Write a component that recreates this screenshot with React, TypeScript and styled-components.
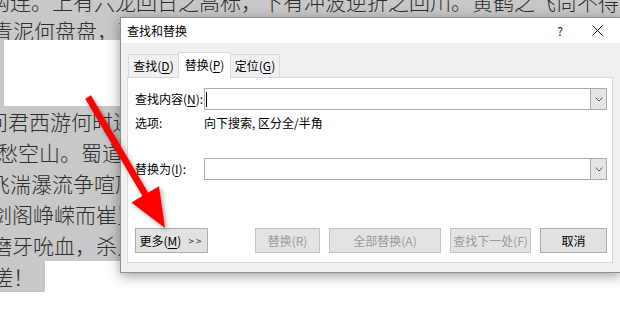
import React from "react";
import styled, { createGlobalStyle } from "styled-components";

const UI_FONT = `"Noto Sans CJK SC", "Microsoft YaHei", "Noto Sans", sans-serif`;

const GlobalStyle = createGlobalStyle`
  html, body { margin: 0; padding: 0; background: #ffffff; }
  body { overflow: hidden; }
  * { box-sizing: border-box; }
`;

const Page = styled.div`
  position: relative;
  width: 620px;
  height: 309px;
  overflow: hidden;
  background: #ffffff;
`;

/* ---------- document behind the dialog ---------- */

const Doc = styled.div`
  display: flex;
  flex-direction: column;
  align-items: flex-start;
  margin-top: -13px;
  font-family: ${UI_FONT};
  font-size: 21px;
  font-weight: 300;
  color: #2e2e2e;
`;

const Line = styled.div<{ $shift: number; $h?: number; $lh?: number; $short?: boolean }>`
  height: ${(p) => p.$h ?? 31}px;
  line-height: ${(p) => p.$lh ?? 31}px;
  background: #c8c8c8;
  white-space: nowrap;
  text-indent: ${(p) => p.$shift}px;
  width: ${(p) => (p.$short ? "auto" : "100%")};
  padding-right: ${(p) => (p.$short ? "11px" : "0")};
`;

const BlankLine = styled.div`
  width: 100%;
  height: 66px;
  background: #c8c8c8;
  padding-left: 4px;
`;

const BlankFill = styled.div`
  height: 100%;
  background: #ffffff;
`;

/* ---------- dialog ---------- */

const Dialog = styled.div`
  position: absolute;
  left: 120px;
  top: 17px;
  width: 501px;
  height: 256px;
  background: #f0f0f0;
  border: 1px solid #8f8f8f;
  box-shadow: 0 3px 12px rgba(0, 0, 0, 0.38);
  font-family: ${UI_FONT};
  font-size: 12px;
  color: #000;
  display: flex;
  flex-direction: column;
`;

const TitleBar = styled.div`
  height: 25px;
  background: #ffffff;
  display: flex;
  align-items: center;
  padding-left: 6px;
`;

const Title = styled.div`
  flex: 1;
  line-height: 16px;
`;

const TitleButton = styled.div<{ $w: number }>`
  width: ${(p) => p.$w}px;
  height: 25px;
  display: flex;
  align-items: center;
  justify-content: center;
  color: #222;
  font-size: 12px;
`;

const Body = styled.div`
  flex: 1;
  display: flex;
  flex-direction: column;
  padding: 9px 7px 0 6px;
`;

const Tabs = styled.div`
  position: relative;
  z-index: 1;
  display: flex;
  align-items: flex-end;
  height: 26px;
  margin-bottom: -1px;
  padding-left: 1px;
`;

const Tab = styled.div<{ $active?: boolean; $w: number }>`
  position: relative;
  z-index: ${(p) => (p.$active ? 2 : 1)};
  width: ${(p) => p.$w}px;
  height: ${(p) => (p.$active ? 26 : 23)}px;
  margin-bottom: ${(p) => (p.$active ? 0 : 1)}px;
  margin-left: -1px;
  &:first-child { margin-left: 0; }
  border: 1px solid #d9d9d9;
  border-bottom: none;
  background: ${(p) => (p.$active ? "#ffffff" : "#f0f0f0")};
  display: flex;
  align-items: center;
  justify-content: center;
  padding-bottom: ${(p) => (p.$active ? 1 : 0)}px;
  line-height: 16px;
`;

const Panel = styled.div`
  height: 186px;
  background: #ffffff;
  border: 1px solid #d9d9d9;
  padding: 0 5px 0 7px;
  display: flex;
  flex-direction: column;
`;

const FieldRow = styled.div<{ $top: number }>`
  display: grid;
  grid-template-columns: 69px 1fr;
  align-items: center;
  margin-top: ${(p) => p.$top}px;
`;

const Label = styled.div`
  line-height: 16px;
  white-space: nowrap;
`;

const Combo = styled.div`
  height: 22px;
  border: 1px solid #ababab;
  background: #ffffff;
  display: flex;
  align-items: stretch;
`;

const ComboText = styled.div`
  flex: 1;
  display: flex;
  align-items: center;
  padding-left: 1px;
`;

const Caret = styled.span`
  width: 1px;
  height: 15px;
  background: #000;
`;

const DropButton = styled.div`
  width: 16px;
  border-left: 1px solid #ababab;
  background: #e5e5e5;
  display: flex;
  align-items: center;
  justify-content: center;
`;

const ButtonRow = styled.div`
  display: flex;
  align-items: center;
  margin-top: 48px;
`;

const ButtonGroup = styled.div`
  margin-left: auto;
  display: flex;
  gap: 9px;
`;

const Button = styled.div<{ $w: number; $disabled?: boolean }>`
  width: ${(p) => p.$w}px;
  height: 25px;
  display: flex;
  align-items: center;
  justify-content: center;
  white-space: nowrap;
  border: 1px solid ${(p) => (p.$disabled ? "#c2c2c2" : "#adadad")};
  background: ${(p) => (p.$disabled ? "#e3e3e3" : "#e1e1e1")};
  color: ${(p) => (p.$disabled ? "#9a9a9a" : "#000")};
  line-height: 16px;
`;

const Chevrons = styled.span`
  margin-left: 7px;
  font-size: 10px;
  letter-spacing: 2px;
  color: #333;
`;

const Key = styled.span`
  text-decoration: underline;
  text-underline-offset: 2px;
`;

const ArrowLayer = styled.svg`
  position: absolute;
  left: 0;
  top: 0;
  width: 620px;
  height: 309px;
  pointer-events: none;
  filter: drop-shadow(2px 2px 2px rgba(0, 0, 0, 0.35));
`;

const Chevron = () => (
  <svg width="8" height="5" viewBox="0 0 8 5">
    <polyline points="0.5,0.5 4,4 7.5,0.5" fill="none" stroke="#555" strokeWidth="1" />
  </svg>
);

const CloseIcon = () => (
  <svg width="11" height="11" viewBox="0 0 11 11">
    <path d="M0.5 0.5 L10.5 10.5 M10.5 0.5 L0.5 10.5" stroke="#111" strokeWidth="1" />
  </svg>
);

export default function App() {
  return (
    <>
      <GlobalStyle />
      <Page>
        <Doc>
          <Line $shift={-11} $h={28} $lh={28}>
            钩连。上有六龙回日之高标，下有冲波逆折之回川。黄鹤之飞尚不得过
          </Line>
          <Line $shift={-8} $h={25}>
            青泥何盘盘，百步九折萦岩峦。扪参历井仰胁息
          </Line>
          <BlankLine>
            <BlankFill />
          </BlankLine>
          <Line $shift={-13}>问君西游何时还？畏途巉岩不可攀。</Line>
          <Line $shift={-3}>愁空山。蜀道之难，难于上青天，</Line>
          <Line $shift={-11}>飞湍瀑流争喧豗，砯崖转石万壑雷。</Line>
          <Line $shift={-9}>剑阁峥嵘而崔嵬，一夫当关，万夫莫开。</Line>
          <Line $shift={-9}>磨牙吮血，杀人如麻。锦城虽云乐，</Line>
          <Line $shift={-8} $short>
            嗟！
          </Line>
        </Doc>

        <Dialog>
          <TitleBar>
            <Title>查找和替换</Title>
            <TitleButton $w={30}>?</TitleButton>
            <TitleButton $w={45}>
              <CloseIcon />
            </TitleButton>
          </TitleBar>
          <Body>
            <Tabs>
              <Tab $w={51}>
                查找(<Key>D</Key>)
              </Tab>
              <Tab $w={53} $active>
                替换(<Key>P</Key>)
              </Tab>
              <Tab $w={50}>
                定位(<Key>G</Key>)
              </Tab>
            </Tabs>
            <Panel>
              <FieldRow $top={10}>
                <Label>
                  查找内容(<Key>N</Key>):
                </Label>
                <Combo>
                  <ComboText>
                    <Caret />
                  </ComboText>
                  <DropButton>
                    <Chevron />
                  </DropButton>
                </Combo>
              </FieldRow>
              <FieldRow $top={5}>
                <Label>选项:</Label>
                <Label>向下搜索, 区分全/半角</Label>
              </FieldRow>
              <FieldRow $top={27}>
                <Label>
                  替换为(<Key>I</Key>):
                </Label>
                <Combo>
                  <ComboText />
                  <DropButton>
                    <Chevron />
                  </DropButton>
                </Combo>
              </FieldRow>
              <ButtonRow>
                <Button $w={73}>
                  更多(<Key>M</Key>)<Chevrons>&gt;&gt;</Chevrons>
                </Button>
                <ButtonGroup>
                  <Button $w={65} $disabled>
                    替换(R)
                  </Button>
                  <Button $w={112} $disabled>
                    全部替换(A)
                  </Button>
                  <Button $w={81} $disabled>
                    查找下一处(F)
                  </Button>
                  <Button $w={67}>取消</Button>
                </ButtonGroup>
              </ButtonRow>
            </Panel>
          </Body>
        </Dialog>

        <ArrowLayer viewBox="0 0 620 309">
          <line x1="88" y1="97" x2="148" y2="199" stroke="#ff0000" strokeWidth="6.5" />
          <polygon points="131.4,202.5 159,186.3 165,228" fill="#ff0000" />
        </ArrowLayer>
      </Page>
    </>
  );
}
